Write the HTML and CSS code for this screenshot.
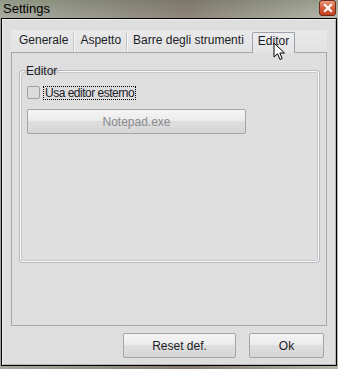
FILE: index.html
```html
<!DOCTYPE html>
<html lang="it">
<head>
    <meta charset="UTF-8">
    <title>Settings</title>
    <link rel="stylesheet" href="styles.css">
</head>
<body>

<div class="titlebar">
    <span class="title">Settings</span>
    <div class="close">
        <svg width="14" height="14" viewBox="0 0 14 14">
            <path d="M4 4 L10 10 M10 4 L4 10" stroke="#fff" stroke-width="2.2" stroke-linecap="square"/>
        </svg>
    </div>
</div>

<div class="client">
    <div class="tabbar">
        <div class="tab">Generale</div>
        <div class="tab">Aspetto</div>
        <div class="tab last">Barre degli strumenti</div>
        <div class="tab selected">Editor</div>
    </div>

    <div class="pane">
        <fieldset class="group">
            <legend>Editor</legend>
            <div class="check-row">
                <span class="checkbox"></span>
                <span class="check-label">Usa editor esterno</span>
            </div>
            <button class="btn wide" disabled>Notepad.exe</button>
        </fieldset>
    </div>

    <div class="footer">
        <button class="btn reset">Reset def.</button>
        <button class="btn ok">Ok</button>
    </div>

    <!-- mouse pointer over the Editor tab -->
    <svg class="cursor" width="14" height="20" viewBox="0 0 14 20">
        <path d="M1 1 L1 15 L4.5 11.8 L7 17.5 L9.2 16.5 L6.8 11 L11.5 11 Z" fill="#fff" stroke="#000" stroke-width="1" stroke-linejoin="round"/>
    </svg>
</div>

</body>
</html>
```

FILE: styles.css
```css
body {
    margin: 0;
    width: 338px;
    height: 369px;
    overflow: hidden;
    font-family: "Liberation Sans", Arial, sans-serif;
    font-size: 12px;
    color: #1c1c28;
    background: linear-gradient(90deg, #a4a89c 0%, #8f8a80 35%, #867a72 55%, #9c9a8e 80%, #b2b4a8 100%);
}
.titlebar {
    height: 18px;
    display: flex;
    align-items: center;
    padding-left: 3px;
    background: linear-gradient(180deg, rgba(90, 110, 70, 0.25) 0%, rgba(255, 255, 255, 0.08) 100%);
}
.title {
    font-size: 13px;
    color: #000;
    flex: 1;
    line-height: 16px;
}
.close {
    width: 15px;
    height: 14px;
    margin-right: 2px;
    margin-top: -2px;
    border: 1px solid #6b2a1a;
    border-radius: 3px;
    background: linear-gradient(180deg, #ec9a7e 0%, #d8603e 45%, #c2401e 100%);
    display: flex;
    align-items: center;
    justify-content: center;
}
.client {
    position: relative;
    box-sizing: border-box;
    width: 336px;
    height: 348px;
    margin-left: 1px;
    border: 1px solid #000;
    background-color: #dedede;
    box-shadow: inset 1px 1px 0 #efefef, inset -1px -1px 0 #b4b4b4;
    padding: 11px 9px 7px 9px;
    display: flex;
    flex-direction: column;
}
.tabbar {
    height: 22px;
    display: flex;
    align-items: flex-end;
    padding-left: 2px;
    background: linear-gradient(180deg, #e9e9e9 0%, #e2e2e2 100%);
}
.tab {
    height: 17px;
    line-height: 16px;
    padding: 0 5px 2px 6px;
    margin-bottom: 1px;
    border-right: 1px solid #c4c4c8;
    box-shadow: 1px 0 0 #f6f6f6;
    white-space: nowrap;
}
.tab.last {
    border-right: none;
    box-shadow: none;
}
.tab.selected {
    height: 20px;
    line-height: 17px;
    padding: 0 5px;
    margin-left: 3px;
    margin-bottom: -1px;
    border: 1px solid #9ea2aa;
    border-bottom: none;
    border-radius: 2px 2px 0 0;
    background: linear-gradient(180deg, #eeeef0 0%, #e4e4e6 100%);
    box-shadow: none;
    position: relative;
    z-index: 1;
}
.pane {
    flex: 1;
    border: 1px solid #a6a8b0;
    padding: 11px 7px 0 8px;
}
.group {
    margin: 0;
    height: 190px;
    padding: 6px 6px 0 6px;
    border: 1px solid #fafafa;
    border-radius: 3px;
    box-shadow: 0 0 0 1px #b8b8c0, inset 0 0 0 1px #c8c8cc;
}
.group legend {
    padding: 0 2px;
    margin-left: -3px;
    line-height: 15px;
}
.check-row {
    display: flex;
    align-items: center;
    margin-top: 1px;
}
.checkbox {
    width: 11px;
    height: 11px;
    border: 1px solid #a0a0a4;
    border-radius: 2px;
    background: #dcdcdc;
}
.check-label {
    margin-left: 4px;
    padding: 0 1px;
    line-height: 12px;
    letter-spacing: -0.5px;
    outline: 1px dotted #000;
    outline-offset: 0;
}
.btn {
    box-sizing: border-box;
    height: 25px;
    font-family: "Liberation Sans", Arial, sans-serif;
    font-size: 12px;
    color: #1c1c28;
    border: 1px solid #a4a4a8;
    border-radius: 2px;
    background: linear-gradient(180deg, #f4f4f4 0%, #ececec 45%, #dedede 50%, #d6d6d6 100%);
    padding: 0;
}
.btn.wide {
    display: block;
    width: 219px;
    margin-top: 10px;
    color: #8a8a8e;
}
.footer {
    display: flex;
    justify-content: flex-end;
    gap: 13px;
    margin-top: 7px;
    padding-right: 3px;
}
.btn.reset {
    width: 113px;
}
.btn.ok {
    width: 75px;
}
.cursor {
    position: absolute;
    left: 271px;
    top: 23px;
    z-index: 2;
}
```
